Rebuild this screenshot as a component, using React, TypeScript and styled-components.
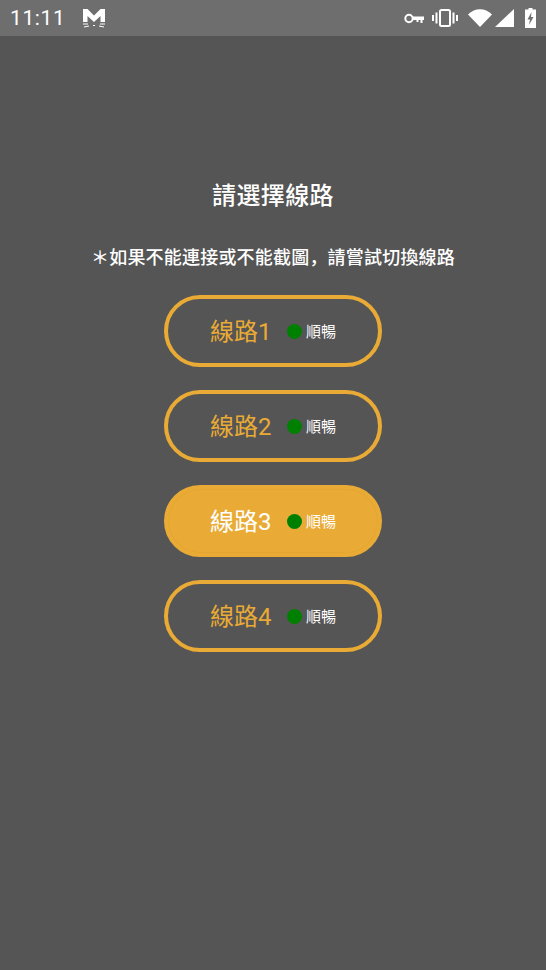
import React from 'react';
import styled, {createGlobalStyle} from 'styled-components';

const GlobalStyle = createGlobalStyle`
  html, body {
    margin: 0;
    padding: 0;
    background: #555555;
  }
`;

const LINES = [1, 2, 3, 4];
const ACTIVE_LINE = 3;

const Page = styled.div`
  width: 546px;
  height: 970px;
  overflow: hidden;
  background: #555555;
  font-family: Roboto, "Noto Sans CJK SC", sans-serif;
`;

const StatusBar = styled.div`
  height: 36px;
  background: #6e6e6e;
  display: flex;
  align-items: center;
  justify-content: space-between;
  padding: 0 10px;
  box-sizing: border-box;
  color: #fff;
`;

const StatusLeft = styled.div`
  display: flex;
  align-items: center;
  gap: 18px;
`;

const StatusRight = styled.div`
  display: flex;
  align-items: center;
`;

const IconSlot = styled.span<{$gap: number}>`
  display: flex;
  margin-left: ${p => p.$gap}px;
`;

const Clock = styled.span`
  font-size: 21px;
  letter-spacing: 0.6px;
`;

const Content = styled.div`
  display: flex;
  flex-direction: column;
  align-items: center;
  padding-top: 144px;
`;

const Title = styled.div`
  font-size: 24px;
  line-height: 32px;
  font-weight: 500;
  letter-spacing: 0.4px;
  color: #fff;
`;

const Hint = styled.div`
  margin-top: 34px;
  font-size: 18px;
  line-height: 24px;
  font-weight: 500;
  letter-spacing: 0.2px;
  color: #fff;
`;

const LineList = styled.div`
  margin-top: 25px;
  display: flex;
  flex-direction: column;
  gap: 23px;
`;

const LineButton = styled.div<{$active: boolean}>`
  width: 218px;
  height: 72px;
  box-sizing: border-box;
  border: 4px solid #e9ab35;
  border-radius: 36px;
  background: ${p => (p.$active ? '#e9ab35' : 'transparent')};
  box-shadow: ${p => (p.$active ? 'inset 0 0 0 1px #e4a631' : 'none')};
  display: flex;
  align-items: center;
  padding-left: 42px;
`;

const LineName = styled.span<{$active: boolean}>`
  width: 77px;
  padding-bottom: 4px;
  font-size: 24px;
  white-space: nowrap;
  color: ${p => (p.$active ? '#fff' : '#e9ab35')};
`;

const Dot = styled.span`
  width: 15px;
  height: 15px;
  border-radius: 50%;
  background: #008000;
`;

const StatusText = styled.span`
  margin-left: 4px;
  padding-bottom: 2px;
  font-size: 15px;
  color: #fff;
`;

const MailIcon = () => (
    <svg width="22" height="20" viewBox="0 0 22 20" fill="none">
        <path d="M0 1h4.500L11 7.500 17.500 1H22v13h-4.500V8L11 14 4.500 8v6H0z" fill="#fff" />
        <path d="M0 16h5M1 19l5-1M16 18l5 1M17 16h5M10 17.500h2" stroke="#fff" strokeWidth="1" />
    </svg>
);

const KeyIcon = () => (
    <svg width="20" height="11" viewBox="0 0 20 11" fill="none">
        <circle cx="5" cy="5.500" r="3.700" stroke="#fff" strokeWidth="2" />
        <path d="M9 3.500h11v3.500h-1.500v3h-2V7h-2v2h-2V7H9z" fill="#fff" />
    </svg>
);

const VibrateIcon = () => (
    <svg width="26" height="18" viewBox="0 0 26 18" fill="none">
        <rect x="8" y="1" width="10" height="16" rx="1.500" stroke="#fff" strokeWidth="2" />
        <path d="M4.500 3.500v11M21.500 3.500v11" stroke="#fff" strokeWidth="2" />
        <path d="M1 6v6M25 6v6" stroke="#fff" strokeWidth="2" />
    </svg>
);

const WifiIcon = () => (
    <svg width="24" height="18" viewBox="0 0 24 18">
        <path d="M0 5.500C7 -1.500 17 -1.500 24 5.500L12 18z" fill="#fff" />
    </svg>
);

const SignalIcon = () => (
    <svg width="19" height="18" viewBox="0 0 19 18">
        <path d="M19 0v18H0z" fill="#fff" />
    </svg>
);

const BatteryIcon = () => (
    <svg width="11" height="20" viewBox="0 0 11 20">
        <path d="M3.500 0h4v1.500H11V20H0V1.500h3.500z" fill="#fff" />
        <path d="M6.500 4L2.500 11.500h2.500L4 17l4.500-8H6z" fill="#6e6e6e" />
    </svg>
);

const App = () => {
    return (
        <Page>
            <GlobalStyle />
            <StatusBar>
                <StatusLeft>
                    <Clock>11:11</Clock>
                    <MailIcon />
                </StatusLeft>
                <StatusRight>
                    <IconSlot $gap={0}><KeyIcon /></IconSlot>
                    <IconSlot $gap={8}><VibrateIcon /></IconSlot>
                    <IconSlot $gap={10}><WifiIcon /></IconSlot>
                    <IconSlot $gap={3}><SignalIcon /></IconSlot>
                    <IconSlot $gap={11}><BatteryIcon /></IconSlot>
                </StatusRight>
            </StatusBar>
            <Content>
                <Title>請選擇線路</Title>
                <Hint>＊如果不能連接或不能截圖，請嘗試切換線路</Hint>
                <LineList>
                    {LINES.map(line => (
                        <LineButton key={line} $active={line === ACTIVE_LINE}>
                            <LineName $active={line === ACTIVE_LINE}>線路{line}</LineName>
                            <Dot />
                            <StatusText>順暢</StatusText>
                        </LineButton>
                    ))}
                </LineList>
            </Content>
        </Page>
    );
};

export default App;
